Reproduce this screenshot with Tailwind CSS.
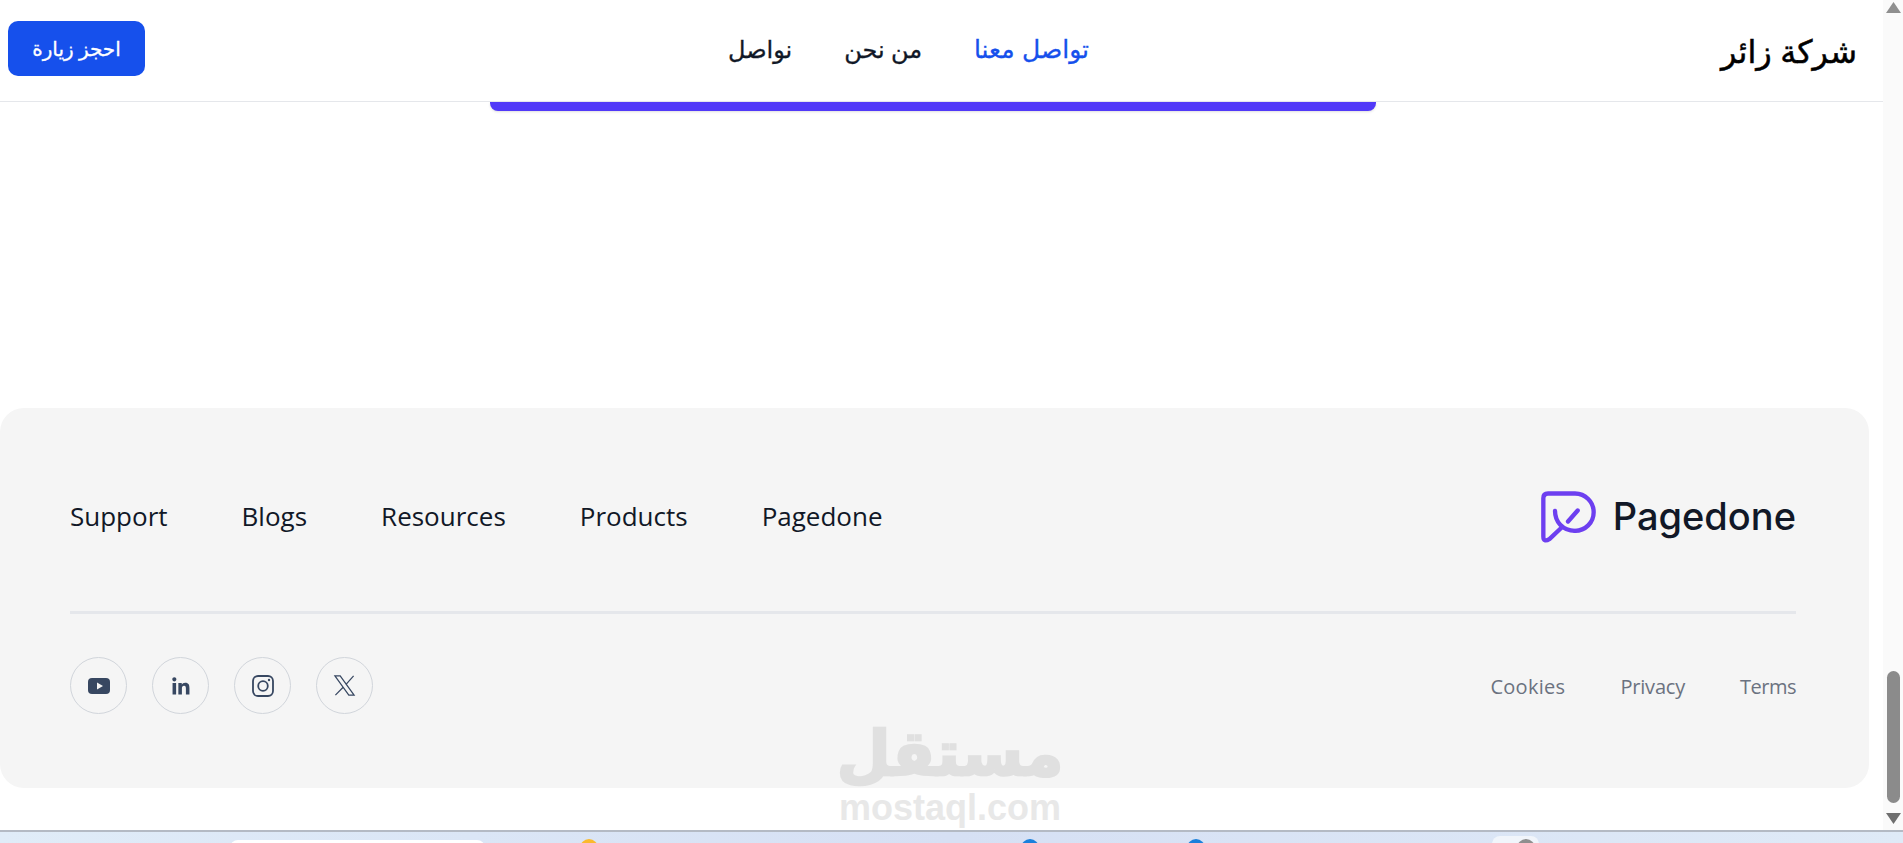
<!DOCTYPE html>
<html lang="ar">
<head>
    <meta charset="utf-8">
    <title>شركة زائر</title>
    <script src="https://cdn.jsdelivr.net/npm/@tailwindcss/browser@4"></script>
</head>
<body class="bg-white overflow-hidden font-['Open_Sans','Noto_Sans',sans-serif]">
    <div class="relative flex flex-col h-[843px] w-[1903px]">
        <div class="flex h-[830px]">
            <!-- Page -->
            <div class="w-[1883px] relative">
                <!-- Navbar -->
                <header dir="rtl" class="h-[102px] border-b border-[#e5e7eb] flex items-center justify-between pr-[26px] pl-2 relative">
                    <div class="text-[32px] text-black [-webkit-text-stroke:0.5px_#000] font-['Noto_Sans','DejaVu_Sans',sans-serif]">شركة زائر</div>
                    <nav class="absolute left-[728px] top-0 h-[98px] w-[361px] flex items-center justify-between text-[24px] text-[#111827] [-webkit-text-stroke:0.3px] font-['Noto_Sans','DejaVu_Sans',sans-serif]">
                        <a class="text-[#1650ec] text-[25px] [word-spacing:1px]">تواصل معنا</a>
                        <a>من نحن</a>
                        <a>نواصل</a>
                    </nav>
                    <button class="w-[137px] h-[55px] mb-1 rounded-[10px] bg-[#1650ec] text-white text-[20px] [-webkit-text-stroke:0.3px] font-['Noto_Sans','DejaVu_Sans',sans-serif]">احجز زيارة</button>
                </header>
                <!-- Bottom of the section above -->
                <div class="ml-[490px] w-[886px] h-[9px] bg-[#5139f8] rounded-b-lg shadow-sm"></div>

                <!-- Footer -->
                <footer class="mt-[297px] w-[1869px] h-[380px] bg-[#f5f5f5] rounded-[24px] pl-[70px] pr-[73px] pt-[72px]">
                    <div class="flex items-center justify-between h-[72px]">
                        <ul class="flex gap-[74px] text-[26px] text-[#111827]">
                            <li>Support</li>
                            <li>Blogs</li>
                            <li>Resources</li>
                            <li>Products</li>
                            <li>Pagedone</li>
                        </ul>
                        <div class="flex items-center gap-[14px]">
                            <svg width="60" height="57" viewBox="60 50 180 170" fill="none" stroke="#6d3ff0" stroke-width="13" stroke-linecap="round" stroke-linejoin="round">
                                <path d="M168 178C130 178 108 150 108 118"/>
                                <path d="M128 168L92 202Q73 214 73 195V80Q73 66 87 66H168A56 56 0 0 1 168 178"/>
                                <path d="M147 150L176 117"/>
                            </svg>
                            <span class="text-[38px] font-[550] text-[#111827] font-['Inter',sans-serif] leading-none">Pagedone</span>
                        </div>
                    </div>
                    <div class="mt-[59px] h-[3px] bg-[#e5e7eb]"></div>
                    <div class="mt-[43px] flex items-center justify-between">
                        <div class="flex gap-[25px]">
                            <a class="w-[57px] h-[57px] rounded-full border border-[#d1d5db] flex items-center justify-center">
                                <svg width="24" height="24" viewBox="0 0 24 24"><rect x="1" y="4" width="22" height="16" rx="4" fill="#374761"/><path d="M10 8.5v7l6-3.5z" fill="#f5f5f5"/></svg>
                            </a>
                            <a class="w-[57px] h-[57px] rounded-full border border-[#d1d5db] flex items-center justify-center">
                                <svg width="24" height="24" viewBox="0 0 24 24" fill="#374761"><path d="M20.447 20.452h-3.554v-5.569c0-1.328-.027-3.037-1.852-3.037-1.853 0-2.136 1.445-2.136 2.939v5.667H9.351V9h3.414v1.561h.046c.477-.9 1.637-1.85 3.37-1.85 3.601 0 4.267 2.37 4.267 5.455v6.286zM5.337 7.433c-1.144 0-2.063-.926-2.063-2.065 0-1.138.92-2.063 2.063-2.063 1.14 0 2.064.925 2.064 2.063 0 1.139-.925 2.065-2.064 2.065zm1.782 13.019H3.555V9h3.564v11.452z"/></svg>
                            </a>
                            <a class="w-[57px] h-[57px] rounded-full border border-[#d1d5db] flex items-center justify-center">
                                <svg width="24" height="24" viewBox="0 0 24 24" fill="none" stroke="#374761" stroke-width="1.8"><rect x="2" y="2" width="20" height="20" rx="5"/><circle cx="12" cy="12" r="4.8"/><circle cx="18" cy="6" r="1.2" fill="#374761" stroke="none"/></svg>
                            </a>
                            <a class="w-[57px] h-[57px] rounded-full border border-[#d1d5db] flex items-center justify-center">
                                <svg width="23" height="23" viewBox="0 0 24 24" fill="none" stroke="#374761" stroke-width="1.3"><path d="M2 2H7.5L22 22H16.5Z"/><path d="M21.5 2L13.6 10.8"/><path d="M10.6 13.8L2.5 22"/></svg>
                            </a>
                        </div>
                        <ul class="flex gap-[55px] pt-[2px] text-[20px] text-[#6b7280]">
                            <li class="tracking-[0.3px]">Cookies</li>
                            <li class="tracking-[-0.2px]">Privacy</li>
                            <li class="tracking-[-0.5px]">Terms</li>
                        </ul>
                    </div>
                </footer>
            </div>
            <!-- Scrollbar -->
            <div class="w-5 bg-[#fafafa] relative flex flex-col items-center justify-between py-[2px]">
                <svg width="15" height="11" viewBox="0 0 15 11" fill="#8f8f8f"><path d="M7.5 0L15 11H0z"/></svg>
                <div class="absolute left-1 top-[671px] w-[13px] h-[132px] rounded-full bg-[#8b8b8b]"></div>
                <svg width="15" height="11" viewBox="0 0 15 11" fill="#6f6f6f" class="mb-1"><path d="M0 0H15L7.5 11z"/></svg>
            </div>
        </div>

        <!-- Taskbar strip -->
        <div class="relative h-[13px] border-t-2 border-[#b4bac4] bg-gradient-to-r from-[#e0ecf8] via-[#d6e0f4] to-[#dfeaf7] overflow-hidden">
            <div class="absolute left-[230px] top-2 w-[255px] h-5 rounded-lg bg-white"></div>
            <div class="absolute left-[580px] top-[7px] w-[18px] h-[18px] rounded-full bg-[#fbb92d]"></div>
            <div class="absolute left-[1021px] top-[7px] w-[18px] h-[18px] rounded-full bg-[#1a80dc]"></div>
            <div class="absolute left-[1187px] top-[7px] w-[18px] h-[18px] rounded-full bg-[#1a80dc]"></div>
            <div class="absolute left-[1492px] top-1 w-[47px] h-6 rounded-lg bg-white/60"></div>
            <div class="absolute left-[1517px] top-[7px] w-[18px] h-[18px] rounded-full bg-[#8f8f8f]"></div>
        </div>

        <!-- Watermark -->
        <div class="absolute left-[800px] top-[712px] w-[300px] flex flex-col items-center pointer-events-none">
            <span dir="rtl" class="text-[62px] leading-[78px] font-bold text-[#e0e0e0] [-webkit-text-stroke:2.5px_#e0e0e0] font-['Noto_Sans','DejaVu_Sans',sans-serif]">مستقل</span>
            <span class="text-[36px] leading-[36px] font-bold text-[#e8e8e8] font-['Liberation_Sans',sans-serif]">mostaql.com</span>
        </div>
    </div>
</body>
</html>
